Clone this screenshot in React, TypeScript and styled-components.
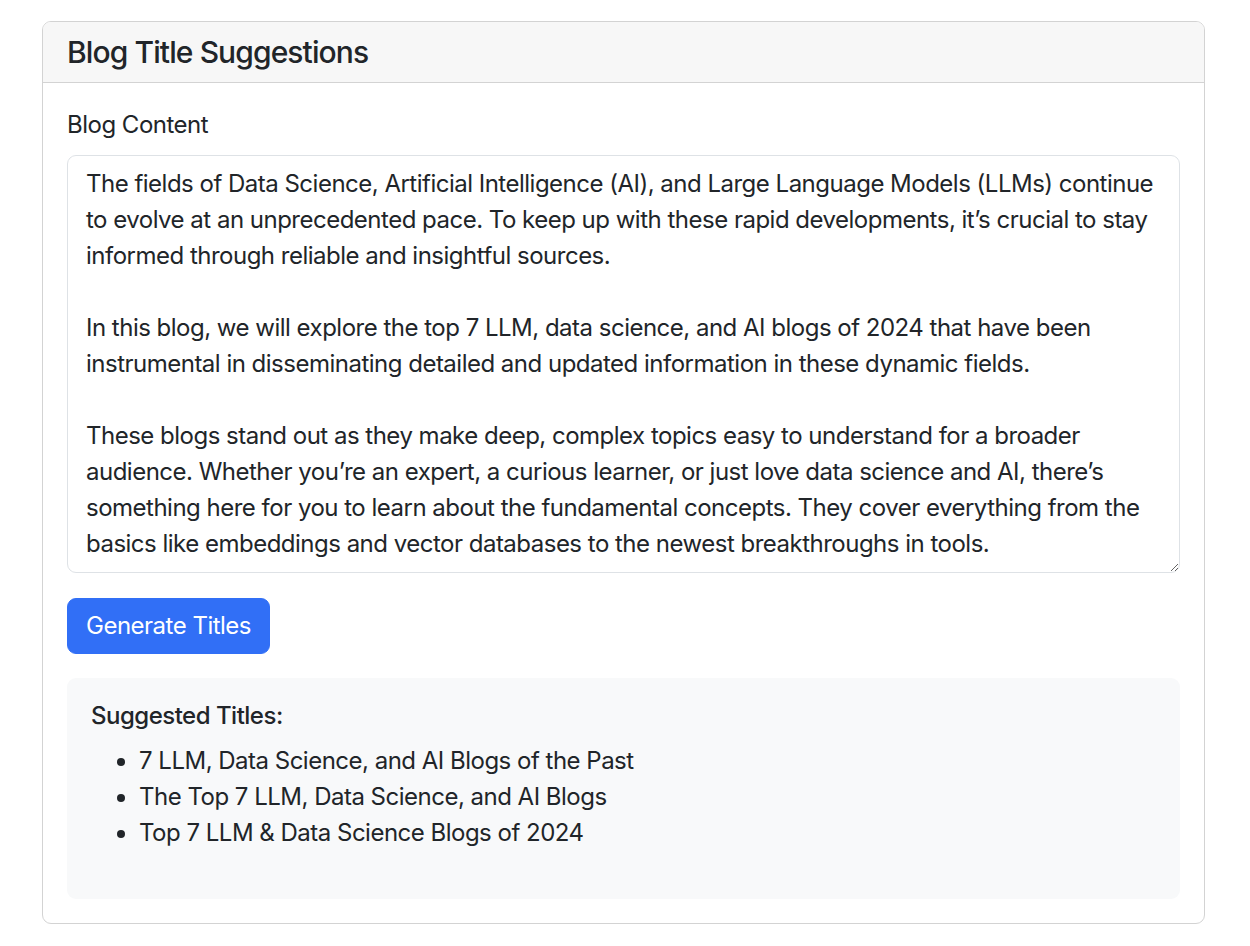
import styled, { createGlobalStyle } from "styled-components";

const GlobalStyle = createGlobalStyle`
  body {
    margin: 0;
    background: #fff;
    color: #212529;
    font-family: Inter, "Noto Sans", sans-serif;
    font-size: 24px;
    line-height: 1.5;
    letter-spacing: -0.021em;
  }
  * { box-sizing: border-box; }
`;

const Page = styled.div`
  padding: 21px 45px 24px 42px;
`;

const Card = styled.section`
  border: 1px solid #d3d3d3;
  border-radius: 9px;
  overflow: hidden;
  background: #fff;
`;

const CardHeader = styled.header`
  padding: 12px 24px;
  background: #f7f7f7;
  border-bottom: 1px solid #d3d3d3;
`;

const Title = styled.h5`
  margin: 0;
  font-size: 30px;
  font-weight: 500;
  line-height: 1.2;
  letter-spacing: -0.03em;
`;

const CardBody = styled.div`
  padding: 24px;
`;

const Label = styled.label`
  display: block;
  margin-bottom: 12px;
`;

const TextArea = styled.textarea`
  display: block;
  width: 100%;
  height: 418px;
  padding: 10px 18px 8px;
  margin-bottom: 25px;
  font: inherit;
  letter-spacing: inherit;
  color: #212529;
  border: 1px solid #dee2e6;
  border-radius: 9px;
  resize: vertical;
  overflow: hidden;
  white-space: pre;
  outline: none;
`;

const Button = styled.button`
  display: inline-block;
  padding: 9px 18px;
  font: inherit;
  letter-spacing: inherit;
  color: #fff;
  background: #316ff6;
  border: 1px solid #316ff6;
  border-radius: 9px;
  cursor: pointer;
`;

const Results = styled.div`
  margin-top: 24px;
  padding: 24px;
  background: #f8f9fa;
  border-radius: 9px;
`;

const ResultsHeading = styled.h6`
  margin: 0 0 12px;
  font-size: 24px;
  font-weight: 500;
  line-height: 1.2;
`;

const TitleList = styled.ul`
  margin: 0 0 24px;
  padding-left: 48px;
`;

const content = `The fields of Data Science, Artificial Intelligence (AI), and Large Language Models (LLMs) continue
to evolve at an unprecedented pace. To keep up with these rapid developments, it’s crucial to stay
informed through reliable and insightful sources.

In this blog, we will explore the top 7 LLM, data science, and AI blogs of 2024 that have been
instrumental in disseminating detailed and updated information in these dynamic fields.

These blogs stand out as they make deep, complex topics easy to understand for a broader
audience. Whether you’re an expert, a curious learner, or just love data science and AI, there’s
something here for you to learn about the fundamental concepts. They cover everything from the
basics like embeddings and vector databases to the newest breakthroughs in tools.`;

const titles = [
  "7 LLM, Data Science, and AI Blogs of the Past",
  "The Top 7 LLM, Data Science, and AI Blogs",
  "Top 7 LLM & Data Science Blogs of 2024",
];

export default function App() {
  return (
    <>
      <GlobalStyle />
      <Page>
        <Card>
          <CardHeader>
            <Title>Blog Title Suggestions</Title>
          </CardHeader>
          <CardBody>
            <Label htmlFor="blog-content">Blog Content</Label>
            <TextArea id="blog-content" wrap="off" defaultValue={content} />
            <Button type="button">Generate Titles</Button>
            <Results>
              <ResultsHeading>Suggested Titles:</ResultsHeading>
              <TitleList>
                {titles.map((t) => (
                  <li key={t}>{t}</li>
                ))}
              </TitleList>
            </Results>
          </CardBody>
        </Card>
      </Page>
    </>
  );
}
